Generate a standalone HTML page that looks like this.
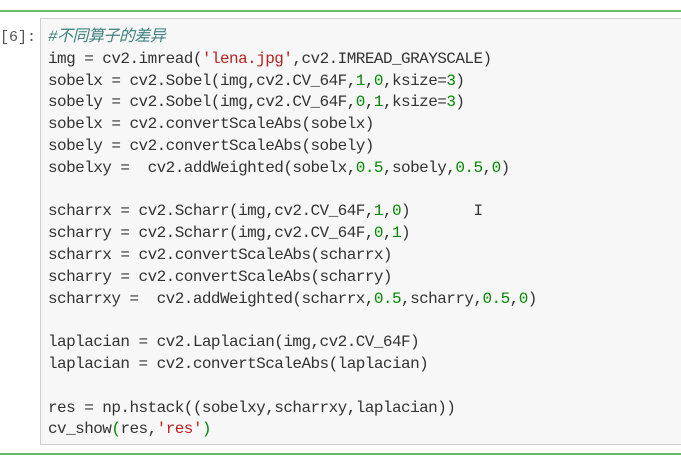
<!DOCTYPE html>
<html><head><meta charset="utf-8"><style>
html,body{margin:0;padding:0;width:681px;height:460px;background:#fff;overflow:hidden;position:relative}
.g{position:absolute;left:0;width:681px;height:2px;background:#66bb6a}
.p{position:absolute;left:0;top:29px;font:15px "Liberation Mono","Noto Sans CJK SC",monospace;color:#555}
.box{position:absolute;left:40px;top:18px;width:650px;height:427px;background:#f7f7f7;border:1px solid #cfcfcf;box-sizing:border-box}
pre{position:absolute;left:48px;top:27px;margin:0;font:16px/21.8px "Liberation Mono","Noto Sans CJK SC",monospace;letter-spacing:-0.55px;color:#333}
.c{color:#408080;font-style:italic}.s{color:#ba2121}.n{color:#080}
</style></head><body>
<div class="g" style="top:10px"></div>
<div class="p">[6]:</div>
<div class="box"></div>
<pre><span class="c">#不同算子的差异</span>
img = cv2.imread(<span class="s">'lena.jpg'</span>,cv2.IMREAD_GRAYSCALE)
sobelx = cv2.Sobel(img,cv2.CV_64F,<span class="n">1</span>,<span class="n">0</span>,ksize=<span class="n">3</span>)
sobely = cv2.Sobel(img,cv2.CV_64F,<span class="n">0</span>,<span class="n">1</span>,ksize=<span class="n">3</span>)
sobelx = cv2.convertScaleAbs(sobelx)
sobely = cv2.convertScaleAbs(sobely)
sobelxy =  cv2.addWeighted(sobelx,<span class="n">0.5</span>,sobely,<span class="n">0.5</span>,<span class="n">0</span>)

scharrx = cv2.Scharr(img,cv2.CV_64F,<span class="n">1</span>,<span class="n">0</span>)       <span>I</span>
scharry = cv2.Scharr(img,cv2.CV_64F,<span class="n">0</span>,<span class="n">1</span>)
scharrx = cv2.convertScaleAbs(scharrx)
scharry = cv2.convertScaleAbs(scharry)
scharrxy =  cv2.addWeighted(scharrx,<span class="n">0.5</span>,scharry,<span class="n">0.5</span>,<span class="n">0</span>)

laplacian = cv2.Laplacian(img,cv2.CV_64F)
laplacian = cv2.convertScaleAbs(laplacian)

res = np.hstack((sobelxy,scharrxy,laplacian))
cv_show<span class="n">(</span>res,<span class="s">'res'</span><span class="n">)</span></pre>
<div class="g" style="top:453px"></div>
</body></html>
